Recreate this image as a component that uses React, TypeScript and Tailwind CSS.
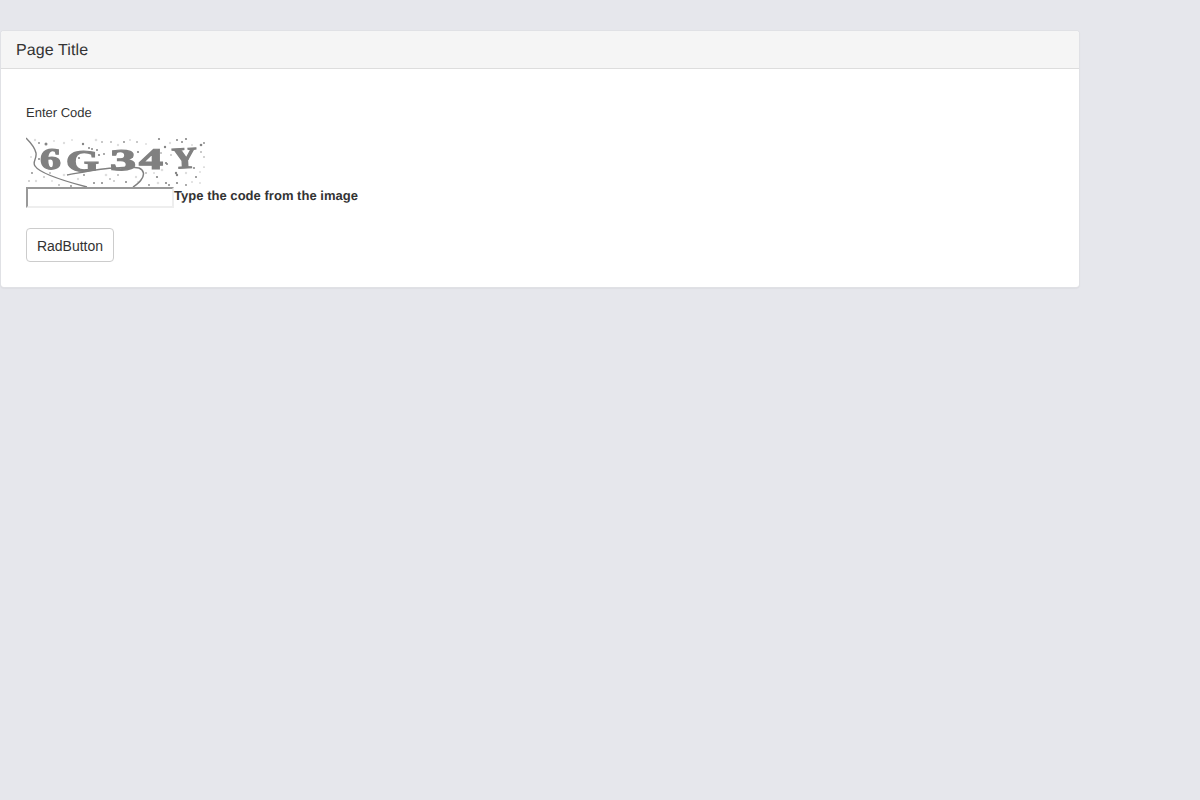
const dots: [number, number, number][] = [
  [20, 7, 1.5], [13, 6, 0.9], [57, 7, 1.2], [63, 11, 1], [66, 12, 1], [71, 13, 1], [73, 18, 1.1], [78, 17, 0.9], [53, 21, 1.1], [33, 25, 0.9],
  [13, 22, 1], [6, 36, 0.9], [58, 38, 0.9], [68, 46, 1], [76, 46, 1], [33, 48, 0.8], [45, 49, 0.9], [85, 5, 0.8], [76, 5, 0.8], [133, 2, 1.1],
  [151, 3, 1], [160, 2, 1.1], [156, 5, 1], [98, 5, 0.9], [111, 5, 0.8], [112, 15, 1.1], [106, 20, 1.1], [139, 10, 1.2], [135, 16, 0.8], [140, 26, 1.1],
  [141, 27, 1], [150, 36, 1.2], [151, 38, 1.2], [131, 40, 1.1], [168, 31, 1], [170, 40, 1], [175, 8, 1.3], [175, 15, 0.8], [100, 45, 1], [123, 48, 0.9],
  [140, 46, 1.1], [143, 48, 1], [151, 46, 1.1], [160, 48, 0.9], [178, 6, 0.9], [178, 20, 0.7], [178, 30, 0.6], [120, 36, 0.8], [92, 38, 0.8], [84, 42, 0.8],
  [24, 36, 0.8], [18, 40, 0.7], [3, 44, 0.7], [88, 44, 0.7], [162, 22, 0.8], [145, 18, 0.7],
];

const lightDots: [number, number, number][] = [
  [9, 3, 1.2], [28, 4, 1], [38, 6, 1.2], [46, 3, 1], [70, 3, 1.3], [92, 8, 1.2], [104, 3, 1.1], [120, 7, 1], [144, 6, 1.2], [166, 8, 1.1],
  [5, 20, 1.1], [38, 38, 1.3], [52, 42, 1.2], [62, 34, 1], [80, 38, 1.3], [110, 40, 1.2], [128, 36, 1.1], [136, 33, 1.3], [160, 36, 1.2], [174, 35, 1],
  [10, 44, 1.2], [26, 44, 1], [112, 45, 1.1], [132, 46, 1.3], [166, 45, 1.1], [174, 46, 1],
];

function CaptchaImage() {
  return (
    <svg width="180" height="50" viewBox="0 0 180 50" className="block blur-[0.3px]">
      <rect width="180" height="50" fill="#ffffff" />
      {lightDots.map(([cx, cy, r], i) => (
        <circle key={i} cx={cx} cy={cy} r={r} fill="#dedede" />
      ))}
      {dots.map(([cx, cy, r], i) => (
        <circle key={i} cx={cx} cy={cy} r={r} fill="#858585" />
      ))}
      <g fill="#808080" stroke="#808080" strokeWidth="1.2" fontFamily="'Liberation Serif', serif" fontWeight="700" fontSize="30">
        <text x="14" y="32" textLength="21" lengthAdjust="spacingAndGlyphs">6</text>
        <text x="40" y="34" textLength="33" lengthAdjust="spacingAndGlyphs">G</text>
        <text x="84" y="33" textLength="26" lengthAdjust="spacingAndGlyphs">3</text>
        <text x="113" y="32" textLength="24" lengthAdjust="spacingAndGlyphs">4</text>
        <text x="146" y="31" textLength="25" lengthAdjust="spacingAndGlyphs" transform="rotate(-3 159 22)">Y</text>
      </g>
      <path d="M0 1 C5 6 9 11 10 16 C11 22 6 25 9 29 C14 37 38 44 61 50" fill="none" stroke="#808080" strokeWidth="1.4" />
      <path d="M41 38 C58 35 76 31 90 31 C100 30 108 30 113 31 C118 33 119 38 115 43 C113 46 110 48 107 50" fill="none" stroke="#808080" strokeWidth="1.5" />
    </svg>
  );
}

export default function App() {
  return (
    <div className="min-h-[800px] bg-[#e6e7ec] pt-[31px] font-['Liberation_Sans',Arial,sans-serif] text-[#333333] [text-rendering:geometricPrecision]">
      <div className="ml-px w-[1078px] rounded-[3px] bg-white shadow-[0_0_0_1px_#e0e1e5,0_1px_2px_rgba(0,0,0,0.12)]">
        <div className="h-[38px] rounded-t-[3px] border-b border-[#dddddd] bg-[#f5f5f5] px-[15px] pt-[10px] text-[16px] leading-[20px] tracking-[0.1px]">
          Page Title
        </div>
        <div className="px-[25px] pt-[36px] pb-[25px]">
          <div className="text-[13px] leading-[15px]">Enter Code</div>
          <div className="mt-[17px]">
            <CaptchaImage />
          </div>
          <div className="flex items-start">
            <input
              type="text"
              className="h-[21px] w-[148px] border-2 border-t-[#999999] border-r-[#eeeeee] border-b-[#eeeeee] border-l-[#999999] bg-white"
            />
            <label className="text-[13px] leading-[17px] font-bold tracking-[0.03px]">Type the code from the image</label>
          </div>
          <button className="mt-[20px] block h-[34px] w-[88px] rounded-[4px] border border-[#cccccc] bg-white pt-[2px] text-[14px] text-[#333333]">
            RadButton
          </button>
        </div>
      </div>
    </div>
  );
}
